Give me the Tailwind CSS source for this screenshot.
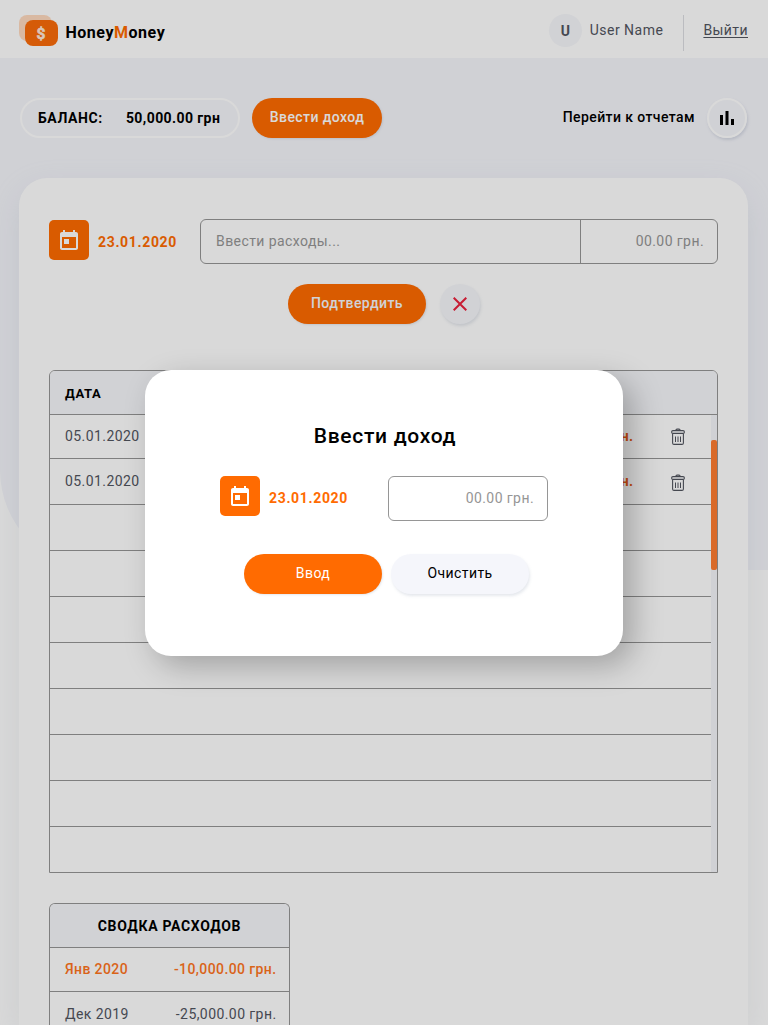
<!DOCTYPE html>
<html lang="ru">
<head>
<meta charset="utf-8">
<title>HoneyMoney</title>
<script src="https://cdn.jsdelivr.net/npm/@tailwindcss/browser@4"></script>
</head>
<body class="relative h-[1025px] w-[768px] overflow-hidden bg-white font-['Roboto',sans-serif] text-sm leading-4 tracking-[0.42px] text-black">
<svg class="hidden">
  <symbol id="calendar" viewBox="0 0 24 24"><path fill="#fff" d="M19 4h-1V2h-2v2H8V2H6v2H5c-1.11 0-2 .9-2 2v14c0 1.100.89 2 2 2h14c1.100 0 2-.9 2-2V6c0-1.100-.9-2-2-2zm0 16H5V9h14v11zM7 11h5v5H7z"/></symbol>
  <symbol id="trash" viewBox="0 0 14 18"><g fill="none" stroke="#52555f" stroke-width="1.1"><path d="M4.700 2.600q.3-1.500 1.300-1.500h2q1 0 1.300 1.500"/><rect x=".6" y="2.600" width="12.800" height="2.800" rx="1.400"/><path d="M1.600 5.400v9.600q0 1.400 1.400 1.400h8q1.400 0 1.400-1.400V5.400"/><path stroke-width="1" d="M4.500 8.500v5.500M7 8.500v5.500M9.500 8.500v5.500"/></g></symbol>
</svg>
<header class="flex h-[58px] items-center pl-[19px] pr-5">
  <svg class="mt-[3px] h-[32px] w-[39px]" viewBox="0 0 39 32"><rect width="33" height="26" rx="8" fill="#ff6b01" opacity=".25"/><rect x="6" y="5" width="33" height="26" rx="8" fill="#fb6c0a"/><text x="22" y="23.500" text-anchor="middle" fill="#ffe9dc" stroke="#ffe9dc" stroke-width=".6" font-family="Roboto" font-size="15.500" font-weight="700" letter-spacing="0">$</text></svg>
  <div class="ml-[7.5px] mt-[7px] text-base font-bold tracking-[0.52px]">Honey<span class="text-[#ff6b01]">M</span>oney</div>
  <div class="ml-auto mt-[3px] flex size-[33px] items-center justify-center rounded-full bg-[#f6f7fb] pl-px font-bold text-[#52555f]">U</div>
  <div class="ml-2 mt-[2px] tracking-[0.5px] text-[#52555f]">User Name</div>
  <div class="ml-[20px] mt-[7px] h-9 w-px bg-[#dcdde2]"></div>
  <div class="ml-[19px] mt-[2px] text-[#52555f] underline decoration-1 underline-offset-2">Выйти</div>
</header>
<main>
  <div class="absolute left-0 top-[58px] -z-10 h-[512px] w-full rounded-bl-[100px] bg-[#f5f6fb]"></div>
  <div class="mt-10 flex h-10 items-center pl-5 pr-[21px]">
    <div class="flex h-10 w-[220px] items-center rounded-full border-2 border-white px-4 font-bold"><span class="tracking-[0.6px]">БАЛАНС:</span><span class="ml-[23px] tracking-[0.42px]">50,000.00 грн</span></div>
    <div class="ml-3 h-10 w-[130px] rounded-full bg-[#ff6b01] pt-[11px] text-center font-medium text-white shadow-[1px_1px_2px_rgba(170,178,197,0.3)]">Ввести доход</div>
    <div class="ml-auto mt-[-2px] font-medium">Перейти к отчетам</div>
    <div class="ml-3 flex size-10 items-center justify-center rounded-full border-2 border-white shadow-[1px_2px_3px_rgba(170,178,197,0.4)]"><svg width="14" height="14" viewBox="0 0 14 14"><path d="M0 4h3v10H0zM5.500 0h3v14h-3zM11 8h3v6h-3z"/></svg></div>
  </div>
  <section class="ml-[19px] mt-10 h-[847px] w-[729px] rounded-t-[28px] bg-white pl-[30px] pt-[41px] shadow-[0_10px_30px_rgba(170,178,197,0.2)]">
    <div class="flex">
      <div class="mt-px flex size-10 items-center justify-center rounded-[5px] bg-[#ff6b01]"><svg class="size-6"><use href="#calendar"/></svg></div>
      <div class="ml-[9px] mt-[15px] w-[102px] font-bold tracking-[0.66px] text-[#ff6b01]">23.01.2020</div>
      <div class="flex h-[45px] w-[518px] rounded-[6px] border border-[#969696] text-[#969696]">
        <div class="w-[380px] border-r border-[#969696] pl-[15px] pt-[13px]">Ввести расходы...</div>
        <div class="flex-1 pr-[13px] pt-[13px] text-right">00.00 грн.</div>
      </div>
    </div>
    <div class="mt-5 flex pl-[239px]">
      <div class="h-10 w-[138px] rounded-full bg-[#ff6b01] pt-[11px] text-center font-medium text-[#f6f7fb] shadow-[1px_1px_2px_rgba(170,178,197,0.3)]">Подтвердить</div>
      <div class="ml-[14px] flex size-10 items-center justify-center rounded-full bg-[#f6f7fb] shadow-[1px_2px_3px_rgba(170,178,197,0.3)]"><svg width="14" height="14" viewBox="0 0 14 14"><path d="M.7.7l12.600 12.600M13.300.7L.7 13.300" stroke="#eb223d" stroke-width="2"/></svg></div>
    </div>
    <div class="mt-[46px] h-[503px] w-[669px] overflow-hidden rounded-t-[6px] border border-[#969696]">
      <div class="h-11 border-b border-[#969696] bg-[#f6f7fb] pl-[15px] pt-[15px] text-[13px] font-bold tracking-[0.6px]">ДАТА</div>
      <div class="flex">
        <div class="w-[661px] text-[#52555f] [&>div]:border-[#969696]">
          <div class="flex h-11 border-b pl-[15px] pt-[13px]"><span>05.01.2020</span><span class="ml-auto mr-[37.5px] font-bold text-[#e65a14]">грн.</span><svg class="mr-[26px] h-[18px] w-[14px]"><use href="#trash"/></svg></div>
          <div class="flex h-[46px] border-b pl-[15px] pt-[14px]"><span>05.01.2020</span><span class="ml-auto mr-[37.5px] font-bold text-[#e65a14]">грн.</span><svg class="mr-[26px] mt-px h-[18px] w-[14px]"><use href="#trash"/></svg></div>
          <div class="h-[46px] border-b"></div>
          <div class="h-[46px] border-b"></div>
          <div class="h-[46px] border-b"></div>
          <div class="h-[46px] border-b"></div>
          <div class="h-[46px] border-b"></div>
          <div class="h-[46px] border-b"></div>
          <div class="h-[46px] border-b"></div>
          <div class="h-[46px]"></div>
        </div>
        <div class="h-[457px] w-[6px] bg-[#f5f6fb] pt-[25px]"><div class="h-[130px] rounded-[2px] bg-[#ff7d31]"></div></div>
      </div>
    </div>
    <div class="mt-[30px] h-[122px] w-[241px] overflow-hidden rounded-t-[6px] border border-b-0 border-[#969696] text-[#52555f]">
      <div class="h-11 border-b border-[#969696] bg-[#f6f7fb] pt-[14px] text-center font-bold tracking-[0.68px] text-black">СВОДКА РАСХОДОВ</div>
      <div class="flex h-11 justify-between border-b border-[#969696] pl-[15px] pr-[12.5px] pt-[13px] font-medium tracking-[0.4px] text-[#ff751d]"><span>Янв 2020</span><span>-10,000.00 грн.</span></div>
      <div class="flex justify-between pl-[15px] pr-[12.5px] pt-[14px]"><span>Дек 2019</span><span>-25,000.00 грн.</span></div>
    </div>
  </section>
</main>
<div class="absolute inset-0 bg-black/15">
  <div class="ml-[145px] mt-[370px] h-[286px] w-[478px] rounded-[26px] bg-white pt-[53px] shadow-[10px_10px_30px_rgba(0,0,0,0.25)]">
    <h1 class="pl-[2px] text-center text-[21px] font-medium leading-[26px] tracking-[0.68px]">Ввести доход</h1>
    <div class="mt-[27px] flex pl-[75px]">
      <div class="flex size-10 items-center justify-center rounded-[5px] bg-[#ff6b01]"><svg class="size-6"><use href="#calendar"/></svg></div>
      <div class="ml-[9px] mt-[14px] w-[119px] font-bold tracking-[0.66px] text-[#ff6b01]">23.01.2020</div>
      <div class="h-[45px] w-[160px] rounded-[6px] border border-[#969696] pr-[13px] pt-[13px] text-right text-[#969696]">00.00 грн.</div>
    </div>
    <div class="mt-[33px] flex gap-[9px] pl-[99px] text-center">
      <div class="h-10 w-[138px] rounded-full bg-[#ff6b01] pt-[11px] text-white shadow-[1px_1px_2px_rgba(170,178,197,0.3)]">Ввод</div>
      <div class="h-10 w-[138px] rounded-full bg-[#f5f6fb] pt-[11px] shadow-[1px_2px_3px_rgba(170,178,197,0.3)]">Очистить</div>
    </div>
  </div>
</div>
</body>
</html>
